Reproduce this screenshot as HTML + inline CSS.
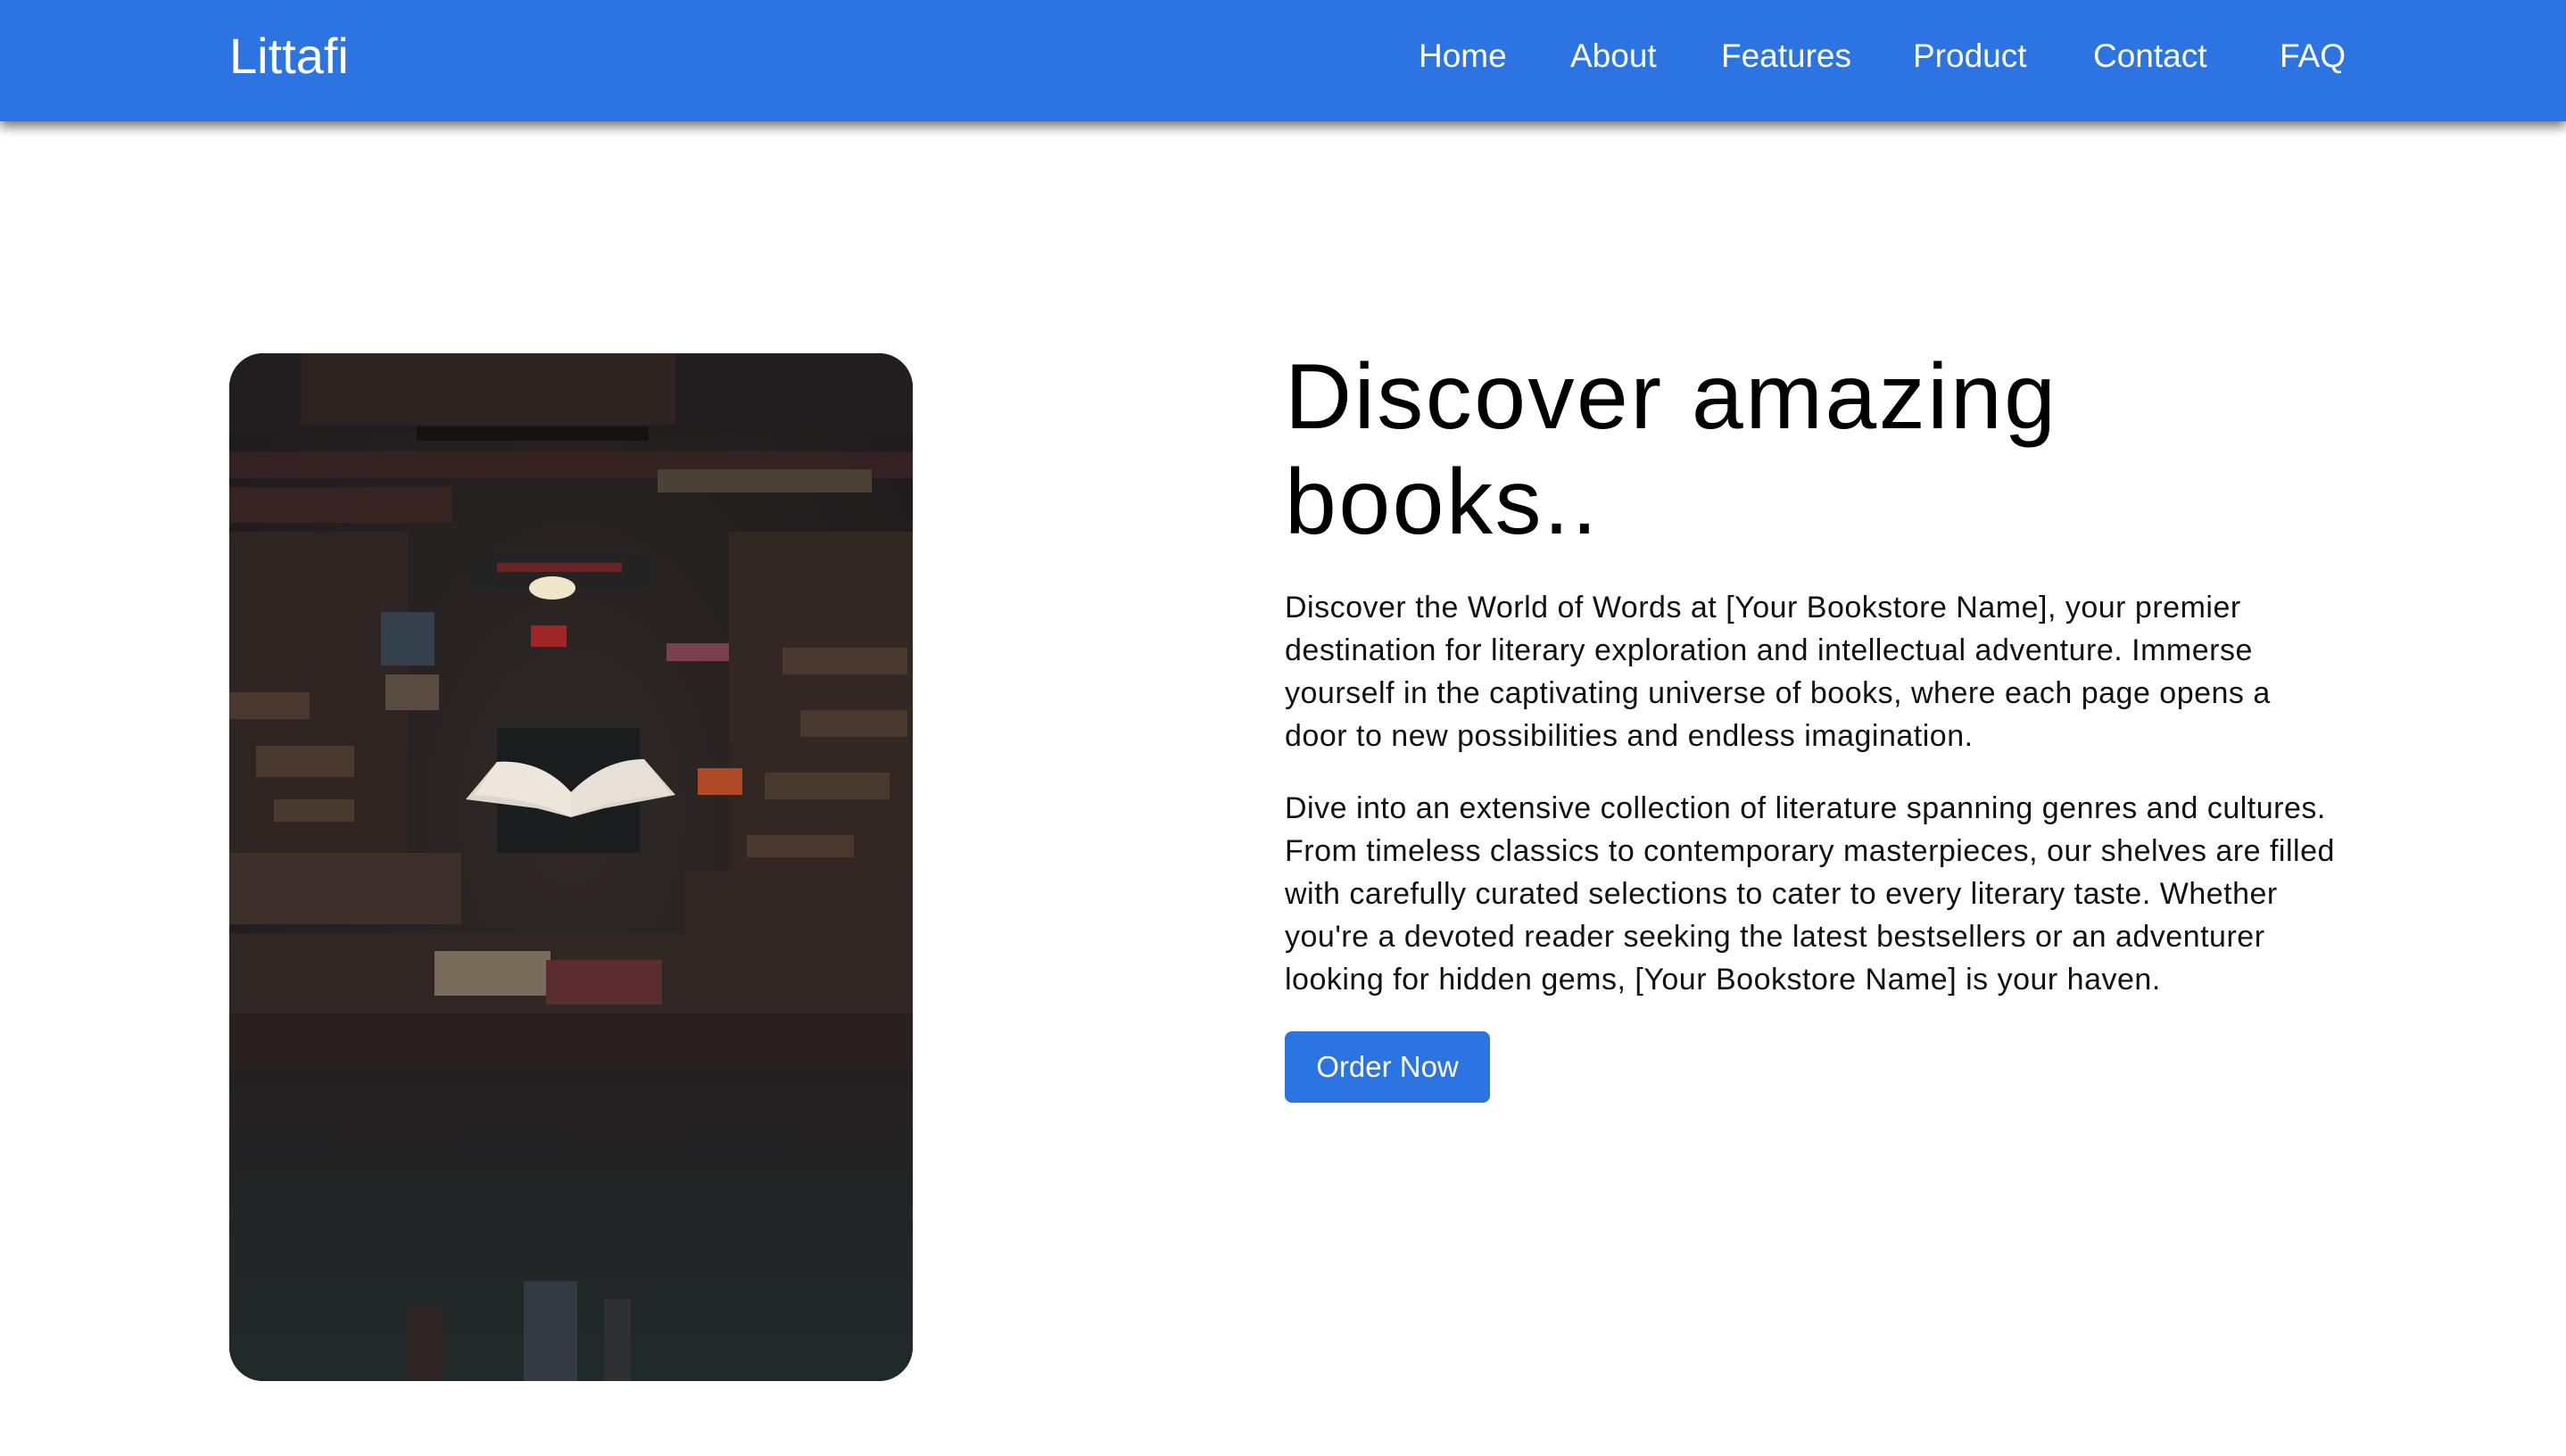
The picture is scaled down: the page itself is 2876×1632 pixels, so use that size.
<!DOCTYPE html>
<html><head><meta charset="utf-8">
<style>
*{margin:0;padding:0;box-sizing:border-box}
html,body{width:2876px;height:1632px;background:#fff;overflow:hidden;font-family:"Liberation Sans",sans-serif;}
.nav{position:absolute;left:0;top:0;width:2876px;height:136px;background:#2b74e2;box-shadow:0 6px 12px rgba(0,0,0,.55);z-index:2}
.logo{position:absolute;left:257px;top:30px;font-size:56px;color:#fff;font-weight:300}
.nl{position:absolute;top:42px;font-size:37px;color:#fff;white-space:nowrap}
.img{position:absolute;left:257px;top:396px;width:766px;height:1152px;border-radius:38px;overflow:hidden;background:#262c2d}
.h1{position:absolute;left:1440px;top:386px;font-size:104px;line-height:118px;color:#000;font-weight:400;white-space:nowrap;letter-spacing:2.5px}
.p{position:absolute;left:1440px;font-size:34px;line-height:48px;color:#111;white-space:nowrap;letter-spacing:0.5px}
.btn{position:absolute;left:1440px;top:1156px;width:230px;height:80px;background:#2b74e2;border-radius:8px;color:#fff;font-size:33px;line-height:80px;text-align:center}
</style></head><body>
<div class="nav">
<div class="logo">Littafi</div>
<div class="nl" style="left:1590px">Home</div>
<div class="nl" style="left:1760px">About</div>
<div class="nl" style="left:1929px">Features</div>
<div class="nl" style="left:2144px">Product</div>
<div class="nl" style="left:2346px">Contact</div>
<div class="nl" style="left:2555px">FAQ</div>
</div>

<div class="img">
<svg width="766" height="1152" viewBox="0 0 766 1152">
<defs>
<radialGradient id="g" cx="0.5" cy="0.45" r="0.6"><stop offset="0" stop-color="#2f2826"/><stop offset="1" stop-color="#1f1c1d"/></radialGradient>
<linearGradient id="bot" x1="0" y1="0" x2="0" y2="1"><stop offset="0" stop-color="#242021"/><stop offset="1" stop-color="#212a2b"/></linearGradient>
</defs>
<rect width="766" height="1152" fill="url(#g)"/>
<rect y="0" width="766" height="90" fill="#221d1e"/>
<rect x="80" y="0" width="420" height="80" fill="#2f2322"/>
<rect x="210" y="82" width="260" height="16" fill="#161313"/>
<rect x="0" y="110" width="766" height="30" fill="#3f2425" opacity=".7"/>
<rect x="480" y="130" width="240" height="26" fill="#4a4235"/>
<rect x="0" y="150" width="250" height="40" fill="#3e2526" opacity=".8"/>
<rect x="0" y="200" width="200" height="400" fill="#2e2523"/>
<rect x="560" y="200" width="206" height="460" fill="#322723"/>
<g fill="#4a392e">
<rect x="0" y="380" width="90" height="30"/><rect x="30" y="440" width="110" height="35"/><rect x="50" y="500" width="90" height="25"/>
<rect x="620" y="330" width="140" height="30"/><rect x="640" y="400" width="120" height="30"/><rect x="600" y="470" width="140" height="30"/>
<rect x="580" y="540" width="120" height="25"/><rect x="570" y="600" width="110" height="30"/>
</g>
<rect x="0" y="560" width="260" height="80" fill="#3d2f29"/>
<rect x="510" y="580" width="256" height="100" fill="#312624"/>
<rect x="270" y="225" width="200" height="40" fill="#232323"/>
<rect x="300" y="235" width="140" height="10" fill="#6a2424"/>
<ellipse cx="362" cy="263" rx="26" ry="13" fill="#f2e6c8"/>
<rect x="338" y="305" width="40" height="24" fill="#a02626"/>
<rect x="170" y="290" width="60" height="60" fill="#34404c"/>
<rect x="175" y="360" width="60" height="40" fill="#5a4c40"/>
<rect x="490" y="325" width="70" height="20" fill="#7a4050"/>
<rect x="525" y="465" width="50" height="30" fill="#b04826"/>
<rect x="300" y="420" width="160" height="140" fill="#1a1d1e"/>
<path d="M265 500 L300 458 Q350 455 383 492 Q420 455 465 455 L500 495 L420 510 L383 520 L345 510 Z" fill="#ddd6cc"/>
<path d="M300 458 Q350 455 383 492 L383 520 Q345 500 275 495 Z" fill="#ece6dc"/>
<path d="M383 492 Q420 455 465 455 L495 495 Q430 498 383 520 Z" fill="#e6e0d6"/>
<rect x="0" y="650" width="766" height="110" fill="#302624"/>
<rect x="230" y="670" width="130" height="50" fill="#7a6c5a"/>
<rect x="355" y="680" width="130" height="50" fill="#5a2e30"/>
<rect x="0" y="740" width="766" height="60" fill="#282021"/>
<rect x="0" y="800" width="766" height="352" fill="url(#bot)"/>
<rect x="330" y="1040" width="60" height="112" fill="#353a40"/>
<rect x="420" y="1060" width="30" height="92" fill="#2f3032"/>
<rect x="200" y="1070" width="40" height="82" fill="#2e2424"/>
</svg>
</div>

<div class="h1">Discover amazing<br>books..</div>
<div class="p" style="top:657px">Discover the World of Words at [Your Bookstore Name], your premier<br>destination for literary exploration and intellectual adventure. Immerse<br>yourself in the captivating universe of books, where each page opens a<br>door to new possibilities and endless imagination.</div>
<div class="p" style="top:882px">Dive into an extensive collection of literature spanning genres and cultures.<br>From timeless classics to contemporary masterpieces, our shelves are filled<br>with carefully curated selections to cater to every literary taste. Whether<br>you're a devoted reader seeking the latest bestsellers or an adventurer<br>looking for hidden gems, [Your Bookstore Name] is your haven.</div>
<div class="btn">Order Now</div>
</body></html>
